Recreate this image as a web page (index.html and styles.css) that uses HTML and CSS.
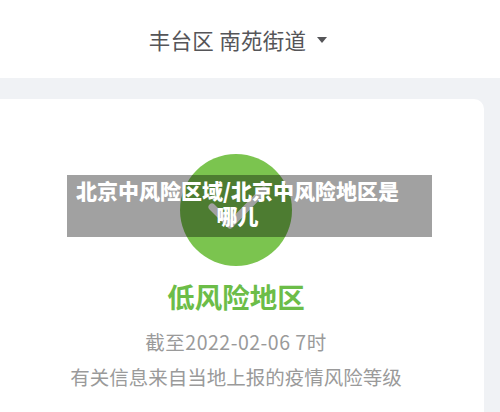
FILE: index.html
```html
<!DOCTYPE html>
<html lang="zh">
<head>
<meta charset="utf-8">
<link rel="stylesheet" href="styles.css">
</head>
<body>
<header class="top">
  <div class="loc">丰台区 南苑街道<span class="caret"></span></div>
</header>
<main class="area">
  <section class="card">
    <div class="badge">
      <svg class="check" width="112" height="112" viewBox="0 0 112 112">
        <path d="M32 53 L50 71 L84 36" fill="none" stroke="#ffffff" stroke-width="7" stroke-linecap="round" stroke-linejoin="round"/>
      </svg>
    </div>
    <h1 class="level">低风险地区</h1>
    <p class="time">截至2022-02-06 7时</p>
    <p class="note">有关信息来自当地上报的疫情风险等级</p>
  </section>
</main>
<div class="caption"><span class="cap-line">北京中风险区域/北京中风险地区是</span><span class="cap-line">哪儿</span></div>
</body>
</html>
```
FILE: styles.css
```css
* { box-sizing: border-box; }
html, body { margin: 0; padding: 0; }
body {
  width: 500px;
  height: 412px;
  overflow: hidden;
  background: #f0f2f5;
  font-family: "Noto Sans CJK SC", "Noto Sans", sans-serif;
}
.top {
  height: 78px;
  background: #ffffff;
  display: flex;
  align-items: center;
  justify-content: center;
  padding-right: 24px;
}
.loc {
  font-size: 21.5px;
  color: #555558;
  display: flex;
  align-items: center;
  letter-spacing: 0.3px;
}
.caret {
  width: 0;
  height: 0;
  border-left: 5px solid transparent;
  border-right: 5px solid transparent;
  border-top: 6px solid #555558;
  margin-left: 11px;
  margin-top: 2px;
}
.area {
  padding: 21px 16px 0 0;
}
.card {
  margin-left: -20px;
  background: #ffffff;
  border-radius: 0 10px 0 0;
  height: 320px;
  display: flex;
  flex-direction: column;
  align-items: center;
  padding: 55px 0 0 8px;
}
.badge {
  width: 112px;
  height: 112px;
  border-radius: 50%;
  background: #7bc44f;
}
.check { display: block; }
.level {
  margin: 13px 0 0;
  font-size: 27.5px;
  line-height: 34px;
  font-weight: 700;
  color: #6cbd48;
}
.time {
  margin: 16px 0 0;
  font-size: 19.5px;
  line-height: 26px;
  color: #9a9a9a;
  letter-spacing: 0.5px;
}
.note {
  margin: 9px 0 0;
  font-size: 19.5px;
  line-height: 26px;
  color: #9a9a9a;
}
.caption {
  position: absolute;
  left: 67px;
  top: 175px;
  width: 365px;
  height: 62px;
  background: rgba(0, 0, 0, 0.37);
  color: #ffffff;
  font-weight: 900;
  font-size: 21px;
  line-height: 25px;
  padding: 3px 34px 0 10px;
  display: flex;
  flex-direction: column;
  align-items: center;
}
.cap-line {
  white-space: nowrap;
}
```
